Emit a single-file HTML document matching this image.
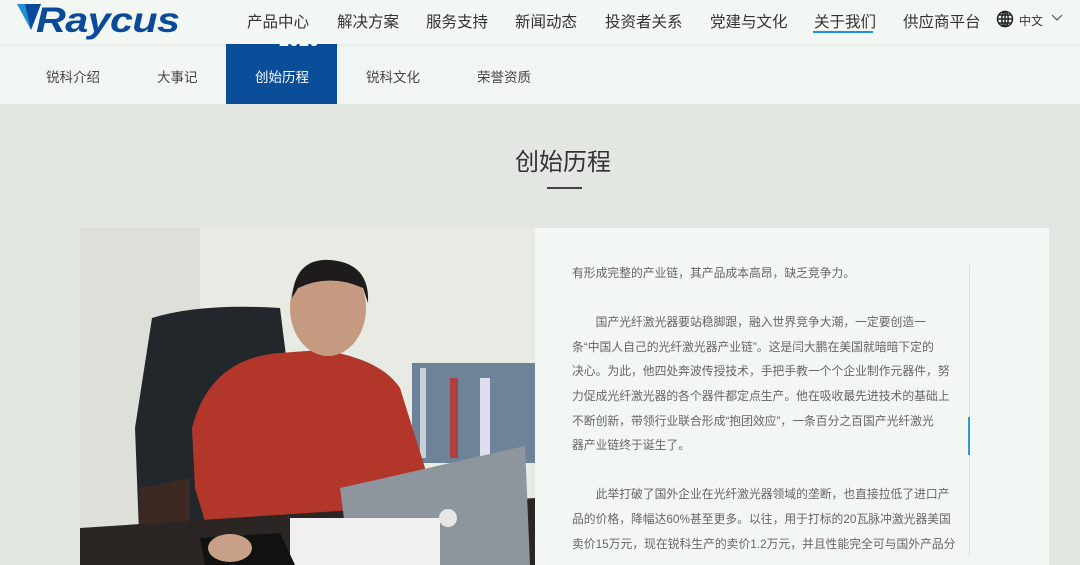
<!DOCTYPE html>
<html><head><meta charset="utf-8"><style>
*{margin:0;padding:0;box-sizing:border-box}
html,body{width:1080px;height:565px;overflow:hidden}
body{background:#e2e7e2;font-family:"Liberation Sans","Noto Sans CJK SC",sans-serif;position:relative}
.hdr{position:absolute;left:0;top:0;width:1080px;height:44px;background:#f2f7f3;box-shadow:0 1px 3px rgba(0,0,0,.08);z-index:2}
.logo{position:absolute;left:36px;top:1px;font:italic 900 35px "Liberation Sans",sans-serif;color:#0a4a9a;letter-spacing:-0.5px;transform:scaleX(1.18);transform-origin:left}
.nav{position:absolute;top:10px;font-size:15.5px;color:#333;white-space:nowrap}
.sub{position:absolute;left:0;top:44px;width:1080px;height:60px;background:#f1f6f2}
.sub span{position:absolute;top:22px;font-size:13.5px;color:#444}
.act{position:absolute;left:226px;top:44px;width:111px;height:60px;background:#0a4d99;overflow:hidden}
.title{position:absolute;left:515px;top:142px;font-size:24px;color:#333;white-space:nowrap}
.bar{position:absolute;left:547px;top:187px;width:35px;height:2px;background:#444}
.card{position:absolute;left:535px;top:228px;width:514px;height:337px;background:#f2f7f3}
.txt{position:absolute;left:572px;top:261px;font-size:11.8px;line-height:24.6px;color:#666;white-space:nowrap}
</style></head><body>
<div class="hdr">
<svg style="position:absolute;left:17px;top:4px" width="24" height="26" viewBox="0 0 24 26"><path d="M0 0H24L14 26Z" fill="#1f8ed4"/><path d="M8 0H24L14 26Z" fill="#0a4a9a"/></svg>
<div class="logo">Raycus</div>
<span class="nav" style="left:247px">产品中心</span>
<span class="nav" style="left:337px">解决方案</span>
<span class="nav" style="left:426px">服务支持</span>
<span class="nav" style="left:515px">新闻动态</span>
<span class="nav" style="left:605px">投资者关系</span>
<span class="nav" style="left:710px">党建与文化</span>
<span class="nav" style="left:814px">关于我们</span>
<div style="position:absolute;left:813px;top:31px;width:60px;height:2px;background:#1a96d8"></div>
<span class="nav" style="left:903px">供应商平台</span>
<svg style="position:absolute;left:996px;top:10px" width="18" height="18" viewBox="0 0 18 18" fill="none" stroke="#222" stroke-width="1.5"><circle cx="9" cy="9" r="7.5"/><ellipse cx="9" cy="9" rx="3.2" ry="7.5"/><path d="M1.5 9h15M9 1.5v15M3 5h12M3 13h12"/></svg>
<span style="position:absolute;left:1019px;top:12px;font-size:12px;color:#333">中文</span>
<svg style="position:absolute;left:1051px;top:14px" width="12" height="8" viewBox="0 0 12 8" fill="none" stroke="#555" stroke-width="1.2"><path d="M1 1l5 5 5-5"/></svg>
</div>
<div class="sub">
<span style="left:46px">锐科介绍</span><span style="left:157px">大事记</span><span style="left:366px">锐科文化</span><span style="left:477px">荣誉资质</span>
</div>
<div class="act"><span style="position:absolute;left:29px;top:22px;font-size:13.5px;color:#fff">创始历程</span><span style="position:absolute;left:53px;top:-14px;font-size:18px;font-weight:bold;color:#fff">2020</span></div>
<div class="title">创始历程</div><div class="bar"></div>
<svg style="position:absolute;left:80px;top:228px" width="455" height="337" viewBox="0 0 455 337">
<rect width="455" height="337" fill="#e8ebe3"/>
<rect x="0" y="0" width="120" height="337" fill="#dde0d8"/>
<path d="M72 90 Q120 75 200 80 L210 160 L200 300 L60 330 L55 200Z" fill="#22272b"/>
<path d="M60 260 L110 250 L110 337 L58 337Z" fill="#3c2a22"/>
<rect x="332" y="135" width="123" height="100" fill="#6f8398"/>
<rect x="340" y="140" width="6" height="90" fill="#c8d0d8"/><rect x="370" y="150" width="8" height="80" fill="#b04040"/><rect x="400" y="150" width="10" height="80" fill="#dde"/>
<path d="M112 200 Q130 130 200 125 L240 122 Q300 130 320 160 L345 240 L330 290 L260 310 L130 310 L115 260Z" fill="#b3362b"/>
<ellipse cx="248" cy="80" rx="38" ry="48" fill="#c59a80"/>
<path d="M212 70 Q215 30 250 32 Q290 35 288 75 L283 60 Q250 45 218 60Z" fill="#1d1b1b"/>
<path d="M0 300 L455 270 L455 337 L0 337Z" fill="#2b2624"/>
<path d="M260 260 L445 218 L450 337 L270 337Z" fill="#8e959c"/>
<rect x="210" y="290" width="150" height="47" fill="#f0f0f0"/>
<path d="M120 310 L200 305 L215 337 L125 337Z" fill="#111"/>
<ellipse cx="150" cy="320" rx="22" ry="14" fill="#c8a088"/>
<circle cx="368" cy="290" r="9" fill="#e6e6e6"/>
</svg>
<div class="card"></div>
<div style="position:absolute;left:969px;top:265px;width:1px;height:292px;background:#dde2de"></div>
<div style="position:absolute;left:968px;top:417px;width:2px;height:38px;background:#2d9ad6"></div>
<div class="txt">
有形成完整的产业链，其产品成本高昂，缺乏竞争力。<br><br>
&emsp;&emsp;国产光纤激光器要站稳脚跟，融入世界竞争大潮，一定要创造一<br>
条“中国人自己的光纤激光器产业链”。这是闫大鹏在美国就暗暗下定的<br>
决心。为此，他四处奔波传授技术，手把手教一个个企业制作元器件，努<br>
力促成光纤激光器的各个器件都定点生产。他在吸收最先进技术的基础上<br>
不断创新，带领行业联合形成“抱团效应”，一条百分之百国产光纤激光<br>
器产业链终于诞生了。<br><br>
&emsp;&emsp;此举打破了国外企业在光纤激光器领域的垄断，也直接拉低了进口产<br>
品的价格，降幅达60%甚至更多。以往，用于打标的20瓦脉冲激光器美国<br>
卖价15万元，现在锐科生产的卖价1.2万元，并且性能完全可与国外产品分
</div>
</body></html>
